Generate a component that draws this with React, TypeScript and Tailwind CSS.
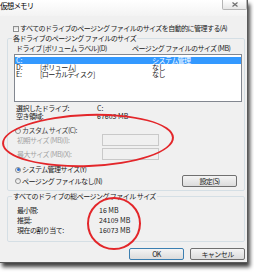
function Radio({ checked = false }: { checked?: boolean }) {
  return (
    <span className="w-[6px] h-[6px] shrink-0 rounded-full border border-[#8e8f8f] bg-linear-to-b from-[#dcdcdc] to-white flex items-center justify-center">
      {checked && <span className="w-[3px] h-[3px] rounded-full bg-[#2c6fd3]" />}
    </span>
  );
}

function Button({ label, isDefault = false }: { label: string; isDefault?: boolean }) {
  return (
    <div
      className={
        "w-[55px] h-[12px] rounded-[2px] border bg-linear-to-b from-[#f4f4f4] to-[#dcdcdc] flex items-center justify-center leading-[10px] " +
        (isDefault ? "border-[#3c7fb1]" : "border-[#707070]")
      }
    >
      {label}
    </div>
  );
}

const drives = [
  { drive: "C:", label: "", size: "システム管理", selected: true },
  { drive: "D:", label: "[ボリューム]", size: "なし", selected: false },
  { drive: "E:", label: "[ローカルディスク]", size: "なし", selected: false },
];

const totals = [
  { label: "最小限:", value: "16 MB" },
  { label: "推奨:", value: "24109 MB" },
  { label: "現在の割り当て:", value: "16073 MB" },
];

export default function App() {
  return (
    <div className="relative w-[254px] h-[272px] bg-white overflow-hidden font-['Noto_Sans_CJK_JP',sans-serif] text-[7px] tracking-[-0.55px] text-[#1a1a1a]">
      {/* Window */}
      <div className="w-[248px] h-[263px] flex flex-col bg-[#f0f0f0] border-r border-b border-[#5a5a5a] shadow-[2px_4px_4px_rgba(0,0,0,0.75)]">
        {/* Title bar */}
        <div className="h-[16px] shrink-0 flex justify-between items-start bg-linear-to-b from-white to-[#f3f3f3]">
          <span className="pt-[2px] text-[7.5px] leading-[8px] tracking-[-0.8px] text-black">仮想メモリ</span>
          <div className="w-[25px] h-[10px] border border-t-0 border-[#b5b5b5] rounded-b-[2px] bg-linear-to-b from-white to-[#e6e6e6] flex items-center justify-center">
            <svg width="6" height="5" viewBox="0 0 6 5">
              <path d="M0.5 0.5 L5.5 4.5 M5.5 0.5 L0.5 4.5" stroke="#6d6d6d" strokeWidth="1.2" />
            </svg>
          </div>
        </div>

        {/* Body */}
        <div className="flex-1 flex flex-col pt-[9px] pl-[7px] pr-[2px]">
          <div className="flex items-center gap-[1px] ml-[6px] h-[7px] leading-[7px] whitespace-nowrap">
            <span className="w-[6px] h-[6px] shrink-0 border border-[#8e8f8f] bg-linear-to-b from-[#e0e0e0] to-white" />
            <span>すべてのドライブのページング ファイルのサイズを自動的に管理する(A)</span>
          </div>

          {/* Per-drive group */}
          <fieldset className="mt-[3px] border border-[#d5dfe5] rounded-[2px] pl-[6px] pr-[2px] pt-[3px] pb-[3px]">
            <legend className="ml-[-2px] px-[1px] leading-[7px]">各ドライブのページング ファイルのサイズ</legend>
            <div className="flex ml-[2px] h-[7px] leading-[7px] whitespace-nowrap">
              <span className="w-[116px]">ドライブ [ボリューム ラベル](D)</span>
              <span>ページング ファイルのサイズ (MB)</span>
            </div>

            <div className="mt-[2px] h-[48px] border border-[#828790] bg-white pt-[2px]">
              {drives.map((d) => (
                <div
                  key={d.drive}
                  className={"flex h-[7px] leading-[7px] " + (d.selected ? "bg-[#3399ff] text-white" : "")}
                >
                  <span className="w-[25px] pl-[1px] tracking-normal">{d.drive}</span>
                  <span className="w-[112px]">{d.label}</span>
                  <span>{d.size}</span>
                </div>
              ))}
            </div>

            <div className="mt-[2px] ml-[2px] leading-[8px]">
              <div className="flex">
                <span className="w-[81px]">選択したドライブ:</span>
                <span className="tracking-normal">C:</span>
              </div>
              <div className="flex">
                <span className="w-[81px]">空き領域:</span>
                <span className="tracking-normal">67603 MB</span>
              </div>
            </div>

            <div className="mt-[7px] ml-[1px] flex items-center gap-[1px] h-[7px] leading-[7px] text-[#3c3c3c]">
              <Radio />
              <span>カスタム サイズ(C):</span>
            </div>
            <div className="ml-[3px] flex items-center h-[12px] text-[#a3a3a3]">
              <span className="w-[85px]">初期サイズ (MB)(I):</span>
              <span className="w-[57px] h-[12px] border border-[#c9c9c9] bg-[#f0f0f0]" />
            </div>
            <div className="mt-[2px] ml-[3px] flex items-center h-[12px] text-[#a3a3a3]">
              <span className="w-[85px]">最大サイズ (MB)(X):</span>
              <span className="w-[57px] h-[12px] border border-[#c9c9c9] bg-[#f0f0f0]" />
            </div>

            <div className="mt-[6px] ml-[1px] flex items-center gap-[1px] h-[7px] leading-[7px]">
              <Radio checked />
              <span>システム管理サイズ(Y)</span>
            </div>
            <div className="mt-[2px] flex items-center justify-between h-[12px]">
              <div className="ml-[1px] flex items-center gap-[1px] leading-[7px]">
                <Radio />
                <span>ページング ファイルなし(N)</span>
              </div>
              <div className="mr-[5px]">
                <Button label="設定(S)" />
              </div>
            </div>
          </fieldset>

          {/* Totals group */}
          <fieldset className="mt-[2px] border border-[#d5dfe5] rounded-[2px] pl-[6px] pt-[5px] pb-[6px]">
            <legend className="ml-[-2px] px-[1px] leading-[7px]">すべてのドライブの総ページング ファイル サイズ</legend>
            {totals.map((t) => (
              <div key={t.label} className="flex ml-[3px] h-[10px] leading-[10px]">
                <span className="w-[82px]">{t.label}</span>
                <span className="tracking-normal">{t.value}</span>
              </div>
            ))}
          </fieldset>

          <div className="mt-[6px] flex justify-end gap-[6px]">
            <Button label="OK" isDefault />
            <Button label="キャンセル" />
          </div>
        </div>
      </div>

      {/* Red annotation circles */}
      <div className="absolute left-[2px] top-[114px] w-[172px] h-[53px] rounded-[50%] border-2 border-[#e3262a] -rotate-[2deg]" />
      <div className="absolute left-[87px] top-[197px] w-[54px] h-[53px] rounded-[50%] border-2 border-[#e3262a]" />
    </div>
  );
}
